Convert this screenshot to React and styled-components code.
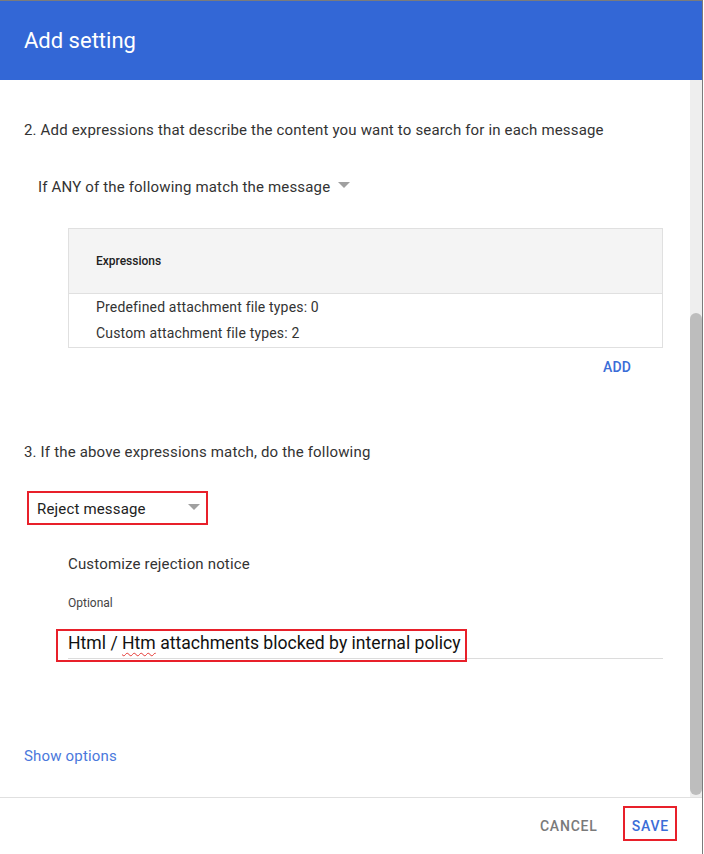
import styled, { createGlobalStyle } from "styled-components";

const GlobalStyle = createGlobalStyle`
  html, body {
    margin: 0;
    padding: 0;
    background: #fff;
  }
  body {
    font-family: Roboto, "Liberation Sans", Arial, sans-serif;
  }
`;

const App = () => {
  return (
    <>
      <GlobalStyle />
      <Dialog>
        <Header>
          <Title>Add setting</Title>
        </Header>
        <Body>
          <Content>
            <StepLabel>
              2. Add expressions that describe the content you want to search
              for in each message
            </StepLabel>
            <MatchDropdown>
              If ANY of the following match the message
              <Caret />
            </MatchDropdown>
            <ExpressionTable>
              <TableHead>Expressions</TableHead>
              <TableBody>
                <TableRow>Predefined attachment file types: 0</TableRow>
                <TableRow>Custom attachment file types: 2</TableRow>
              </TableBody>
            </ExpressionTable>
            <ActionRow>
              <TextButton>ADD</TextButton>
            </ActionRow>

            <StepLabel $top={65}>
              3. If the above expressions match, do the following
            </StepLabel>
            <SelectBox>
              Reject message
              <Caret />
            </SelectBox>
            <Indented>
              <FieldLabel>Customize rejection notice</FieldLabel>
              <HintLabel>Optional</HintLabel>
              <NoticeInput>
                <Marked>
                  Html / <Misspelled>Htm</Misspelled> attachments blocked by
                  internal policy
                </Marked>
              </NoticeInput>
            </Indented>
            <LinkText>Show options</LinkText>
          </Content>
          <Track>
            <Thumb />
          </Track>
        </Body>
        <Footer>
          <FooterButton>CANCEL</FooterButton>
          <FooterButton $primary>SAVE</FooterButton>
        </Footer>
      </Dialog>
    </>
  );
};

const Dialog = styled.div`
  width: 702px;
  height: 853px;
  border-top: 1px solid #7b7b7b;
  border-right: 1px solid #7b7b7b;
  display: flex;
  flex-direction: column;
  background: #fff;
`;

const Header = styled.header`
  height: 79px;
  flex-shrink: 0;
  background: #3367d6;
  display: flex;
  align-items: center;
  padding-left: 24px;
`;

const Title = styled.h1`
  margin: 0 0 1px;
  font-size: 22px;
  font-weight: 400;
  color: #fff;
`;

const Body = styled.div`
  height: 717px;
  flex-shrink: 0;
  display: flex;
`;

const Content = styled.div`
  flex: 1;
  padding: 40px 27px 0 24px;
  color: #333;
  font-size: 15px;
  letter-spacing: 0.17px;
`;

const StepLabel = styled.div`
  margin-top: ${(p) => p.$top || 0}px;
  line-height: 20px;
  color: #333;
`;

const Caret = styled.span`
  display: inline-block;
  width: 0;
  height: 0;
  border-left: 6px solid transparent;
  border-right: 6px solid transparent;
  border-top: 6px solid #a0a0a0;
`;

const MatchDropdown = styled.div`
  margin: 37px 0 0 14px;
  line-height: 20px;
  display: flex;
  align-items: center;
  gap: 8px;

  ${Caret} {
    margin-top: -5px;
  }
`;

const ExpressionTable = styled.div`
  margin: 31px 0 0 44px;
  border: 1px solid #e0e0e0;
`;

const TableHead = styled.div`
  height: 64px;
  background: #f4f4f4;
  border-bottom: 1px solid #e0e0e0;
  display: flex;
  align-items: center;
  padding-left: 27px;
  font-size: 12px;
  font-weight: 500;
  letter-spacing: 0;
  color: #212121;
`;

const TableBody = styled.div`
  padding-bottom: 1px;
`;

const TableRow = styled.div`
  line-height: 26px;
  padding-left: 27px;
  font-size: 14px;
  color: #333;
`;

const ActionRow = styled.div`
  display: flex;
  justify-content: flex-end;
  padding-right: 32px;
  margin-top: 9px;
`;

const TextButton = styled.span`
  line-height: 20px;
  font-size: 14px;
  font-weight: 500;
  color: #3b6dd7;
  cursor: pointer;
`;

const SelectBox = styled.div`
  margin: 29px 0 0 3px;
  height: 30px;
  border: 2px solid #e8202a;
  padding: 2px 6px 0 8px;
  display: flex;
  align-items: center;
  justify-content: space-between;
  box-sizing: border-box;
  height: 34px;
  width: 181px;
  color: #212121;

  ${Caret} {
    margin-top: -4px;
  }
`;

const Indented = styled.div`
  margin: 29px 0 0 44px;
`;

const FieldLabel = styled.div`
  line-height: 20px;
  color: #333;
`;

const HintLabel = styled.div`
  margin-top: 21px;
  line-height: 16px;
  font-size: 12px;
  letter-spacing: 0;
  color: #444;
`;

const NoticeInput = styled.div`
  margin-top: 20px;
  padding-bottom: 3px;
  border-bottom: 1px solid #dcdcdc;
  line-height: 24px;
  font-size: 17.6px;
  letter-spacing: 0;
  color: #111;
`;

const Marked = styled.span`
  position: relative;

  &::after {
    content: "";
    position: absolute;
    inset: -4px -6px -9px -12px;
    border: 2px solid #e8202a;
    pointer-events: none;
  }
`;

const Misspelled = styled.span`
  text-decoration: underline wavy #e53935;
  text-decoration-thickness: 1px;
  text-underline-offset: 3px;
`;

const LinkText = styled.div`
  margin-top: 87px;
  line-height: 20px;
  color: #4a78dc;
  cursor: pointer;
`;

const Track = styled.div`
  width: 12px;
  background: #eeeeee;
  padding: 233px 0 2px;
  display: flex;
  flex-direction: column;
`;

const Thumb = styled.div`
  flex: 1;
  background: #bdbdbd;
  border-radius: 6px;
`;

const Footer = styled.footer`
  flex: 1;
  border-top: 1px solid #e0e0e0;
  display: flex;
  justify-content: flex-end;
  align-items: flex-start;
  gap: 25px;
  padding: 8px 25px 0 0;
`;

const FooterButton = styled.span`
  font-size: 14px;
  font-weight: 500;
  line-height: 20px;
  letter-spacing: 0.8px;
  color: ${(p) => (p.$primary ? "#3b6dd7" : "#7a7a7a")};
  padding: ${(p) => (p.$primary ? "8px 6px 3px 7px" : "10px 0 3px")};
  border: ${(p) => (p.$primary ? "2px solid #e8202a" : "none")};
  cursor: pointer;
`;

export default App;
